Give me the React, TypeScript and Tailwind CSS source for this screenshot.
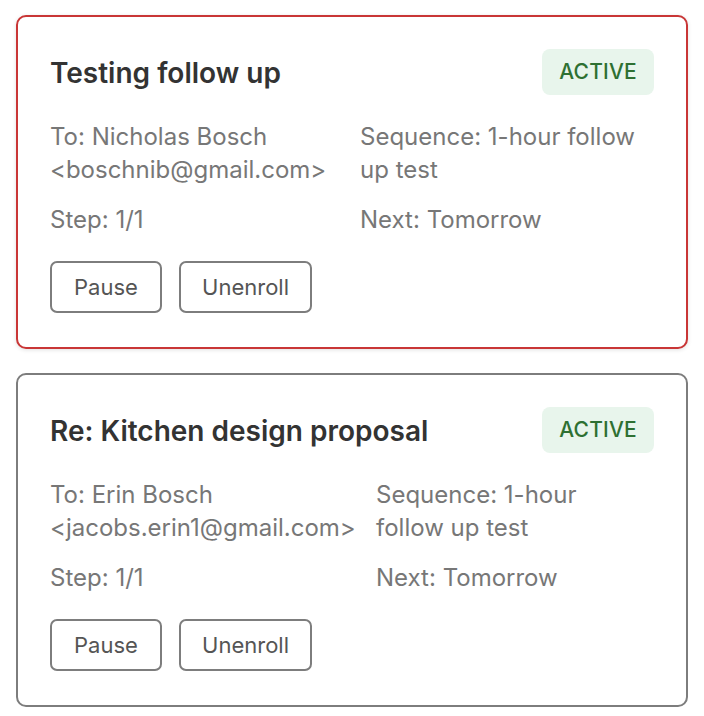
import React from "react";

type Enrollment = {
  title: string;
  name: string;
  email: string;
  sequence: string;
  step: string;
  next: string;
  highlighted: boolean;
  cols: string;
};

const enrollments: Enrollment[] = [
  {
    title: "Testing follow up",
    name: "Nicholas Bosch",
    email: "boschnib@gmail.com",
    sequence: "1-hour follow up test",
    step: "1/1",
    next: "Tomorrow",
    highlighted: true,
    cols: "grid-cols-[310px_293px]",
  },
  {
    title: "Re: Kitchen design proposal",
    name: "Erin Bosch",
    email: "jacobs.erin1@gmail.com",
    sequence: "1-hour follow up test",
    step: "1/1",
    next: "Tomorrow",
    highlighted: false,
    cols: "grid-cols-[326px_250px]",
  },
];

const EnrollmentCard = ({ item }: { item: Enrollment }) => {
  return (
    <div
      className={`rounded-[10px] border-2 bg-white px-[32px] pt-[32px] pb-[34px] ${
        item.highlighted ? "border-[#c93636] shadow-[0_1px_4px_rgba(0,0,0,0.12)]" : "border-[#7d7d7d]"
      }`}
    >
      <div className="flex items-center justify-between">
        <h2 className="pt-[2px] text-[28px] font-semibold leading-[34px] text-[#333]">{item.title}</h2>
        <span className="flex h-[46px] items-center rounded-[8px] bg-[#e8f5ec] px-[17px] text-[21px] font-medium tracking-[0.2px] text-[#2e7032]">
          ACTIVE
        </span>
      </div>

      <div className={`mt-[25px] grid ${item.cols} gap-y-[17px] text-[24px] leading-[33px] text-[#777]`}>
        <div>
          To: {item.name}
          <br />
          &lt;{item.email}&gt;
        </div>
        <div>Sequence: {item.sequence}</div>
        <div>Step: {item.step}</div>
        <div>Next: {item.next}</div>
      </div>

      <div className="mt-[25px] flex gap-[17px]">
        <button className="h-[52px] w-[112px] rounded-[7px] border-2 border-[#7d7d7d] text-[22px] text-[#555]">
          Pause
        </button>
        <button className="h-[52px] w-[133px] rounded-[7px] border-2 border-[#7d7d7d] text-[22px] text-[#555]">
          Unenroll
        </button>
      </div>
    </div>
  );
};

const App = () => {
  return (
    <div className="min-h-screen bg-white px-[16px] pt-[15px] font-['Inter','Liberation_Sans',sans-serif]">
      <div className="flex flex-col gap-[24px]">
        {enrollments.map((item) => (
          <EnrollmentCard key={item.title} item={item} />
        ))}
      </div>
    </div>
  );
};

export default App;
